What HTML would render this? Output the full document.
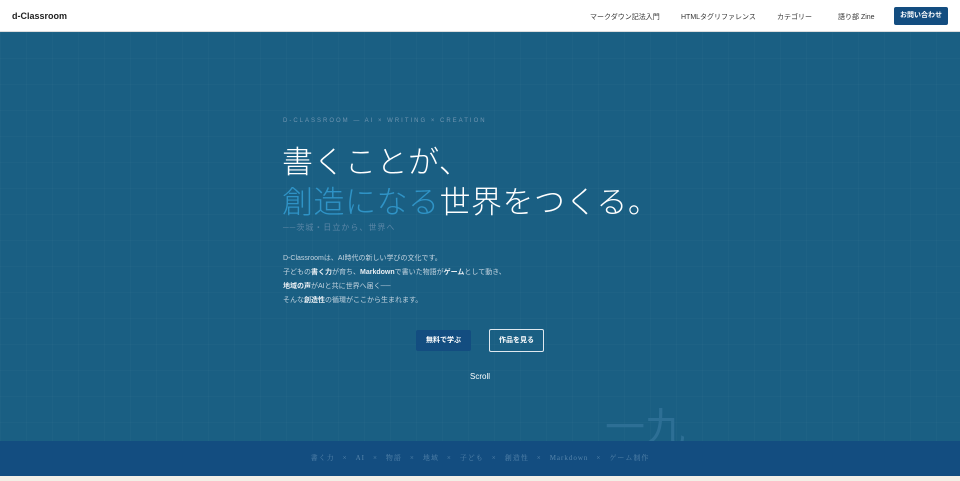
<!DOCTYPE html><html><head><meta charset="utf-8"><style>
*{margin:0;padding:0;box-sizing:border-box}
body{width:960px;height:481px;overflow:hidden;background:#f3efe6;font-family:"Liberation Sans","Noto Sans CJK JP",sans-serif;position:relative}
.hd{position:absolute;top:0;left:0;width:960px;height:32px;background:#fff;border-bottom:1px solid #ddd}
.logo{position:absolute;left:12px;top:11px;font-size:9px;font-weight:bold;color:#222}
.nav{position:absolute;top:12px;font-size:7px;color:#333}
.cbtn{position:absolute;left:894px;top:7px;width:54px;height:18px;background:#134d80;color:#fff;font-size:7px;font-weight:bold;text-align:center;line-height:18px;border-radius:2px}
.hero{position:absolute;top:32px;left:0;width:960px;height:409px;background:#1a5f83;
background-image:linear-gradient(rgba(255,255,255,.02) 1px,transparent 1px),linear-gradient(90deg,rgba(255,255,255,.02) 1px,transparent 1px);background-size:26px 26px}
.t{position:absolute;white-space:nowrap}
.band{position:absolute;top:441px;left:0;width:960px;height:35px;background:#134d80;color:#5584aa;font-family:"Liberation Serif","Noto Serif CJK SC",serif;font-size:7px;text-align:center;line-height:35px;letter-spacing:1px}
.p{font-size:7px;color:#c4d4e0;left:283px}
.p b{color:#e8eef3}
.h{left:282px;font-size:31px;color:#fff;font-weight:300;letter-spacing:0.5px;line-height:40px}
</style></head><body>
<div class="hd"><div class="logo">d-Classroom</div>
<div class="nav" style="left:590px">マークダウン記法入門</div>
<div class="nav" style="left:681px">HTMLタグリファレンス</div>
<div class="nav" style="left:777px">カテゴリー</div>
<div class="nav" style="left:838px">語り部 Zine</div>
<div class="cbtn">お問い合わせ</div></div>
<div class="hero"></div>
<div class="t" style="left:283px;top:118px;font-size:6px;letter-spacing:2px;color:#6f95b1">D-CLASSROOM — AI × WRITING × CREATION</div>
<div class="t h" style="top:143px">書くことが、</div>
<div class="t h" style="top:183px"><span style="color:#2f93c6">創造になる</span>世界をつくる。</div>
<div class="t" style="left:283px;top:222px;font-size:8px;color:#5b86a6;letter-spacing:1px">──茨城・日立から、世界へ</div>
<div class="t p" style="top:253px">D-Classroomは、AI時代の新しい学びの文化です。</div>
<div class="t p" style="top:267px">子どもの<b>書く力</b>が育ち、<b>Markdown</b>で書いた物語が<b>ゲーム</b>として動き、</div>
<div class="t p" style="top:281px"><b>地域の声</b>がAIと共に世界へ届く──</div>
<div class="t p" style="top:295px">そんな<b>創造性</b>の循環がここから生まれます。</div>
<div class="t" style="left:416px;top:330px;width:55px;height:21px;background:#134d80;border-radius:2px;color:#fff;font-size:7px;font-weight:bold;text-align:center;line-height:21px">無料で学ぶ</div>
<div class="t" style="left:489px;top:329px;width:55px;height:23px;border:1px solid #dfe8ef;border-radius:2px;color:#fff;font-size:7px;font-weight:bold;text-align:center;line-height:21px">作品を見る</div>
<div class="t" style="left:470px;top:372px;font-size:8px;color:#fff">Scroll</div>
<div class="t" style="left:605px;top:408px;font-size:40px;color:#2d6f95;line-height:40px;height:33px;overflow:hidden">一九</div>
<div class="band">書く力　×　AI　×　物語　×　地域　×　子ども　×　創造性　×　Markdown　×　ゲーム制作</div>
</body></html>
